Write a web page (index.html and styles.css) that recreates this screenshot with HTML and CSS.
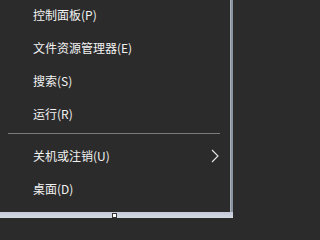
FILE: index.html
```html
<!DOCTYPE html>
<html lang="zh-CN">
<head>
<meta charset="utf-8">
<link rel="stylesheet" href="styles.css">
</head>
<body>
<div class="screen">
  <div class="top">
    <div class="menu">
      <div class="item">控制面板(P)</div>
      <div class="item">文件资源管理器(E)</div>
      <div class="item">搜索(S)</div>
      <div class="item">运行(R)</div>
      <div class="sep"></div>
      <div class="item sub">关机或注销(U)
        <svg class="chev" width="8" height="14" viewBox="0 0 8 14"><path d="M1 1 L7 7 L1 13" fill="none" stroke="#e8e8e8" stroke-width="1.1"/></svg>
      </div>
      <div class="item">桌面(D)</div>
    </div>
    <div class="edge"></div>
  </div>
  <div class="bar"><span class="handle"></span></div>
</div>
</body>
</html>
```
FILE: styles.css
```css
html, body {
  margin: 0;
  padding: 0;
  width: 233px;
  height: 218px;
  overflow: hidden;
  background: #2b2b2b;
}
.screen {
  display: flex;
  flex-direction: column;
  width: 233px;
  height: 218px;
}
.top {
  display: flex;
  height: 212px;
}
.menu {
  width: 230px;
  background: #2b2b2b;
  font-family: "Noto Sans CJK SC", "Noto Sans", sans-serif;
  font-size: 12px;
  color: #f2f2f2;
  overflow: hidden;
}
.item {
  height: 33px;
  display: flex;
  align-items: center;
  padding-left: 33px;
  padding-right: 11px;
  line-height: 1;
}
.item:first-child {
  margin-top: -2px;
}
.sub {
  justify-content: space-between;
}
.chev {
  display: block;
  margin-top: 1px;
}
.sep {
  height: 1px;
  margin: 3px 10px 5px 8px;
  background: #7d7d7d;
}
.edge {
  width: 3px;
  border-left: 1px solid #a9b0b8;
  background: #8a93a0;
  box-sizing: border-box;
}
.bar {
  height: 6px;
  background: linear-gradient(#c3cad6, #d3d9e3);
  position: relative;
}
.handle {
  position: absolute;
  left: 112px;
  top: 1px;
  width: 5px;
  height: 5px;
  box-sizing: border-box;
  border: 1px solid #333;
  background: #fff;
}
```
